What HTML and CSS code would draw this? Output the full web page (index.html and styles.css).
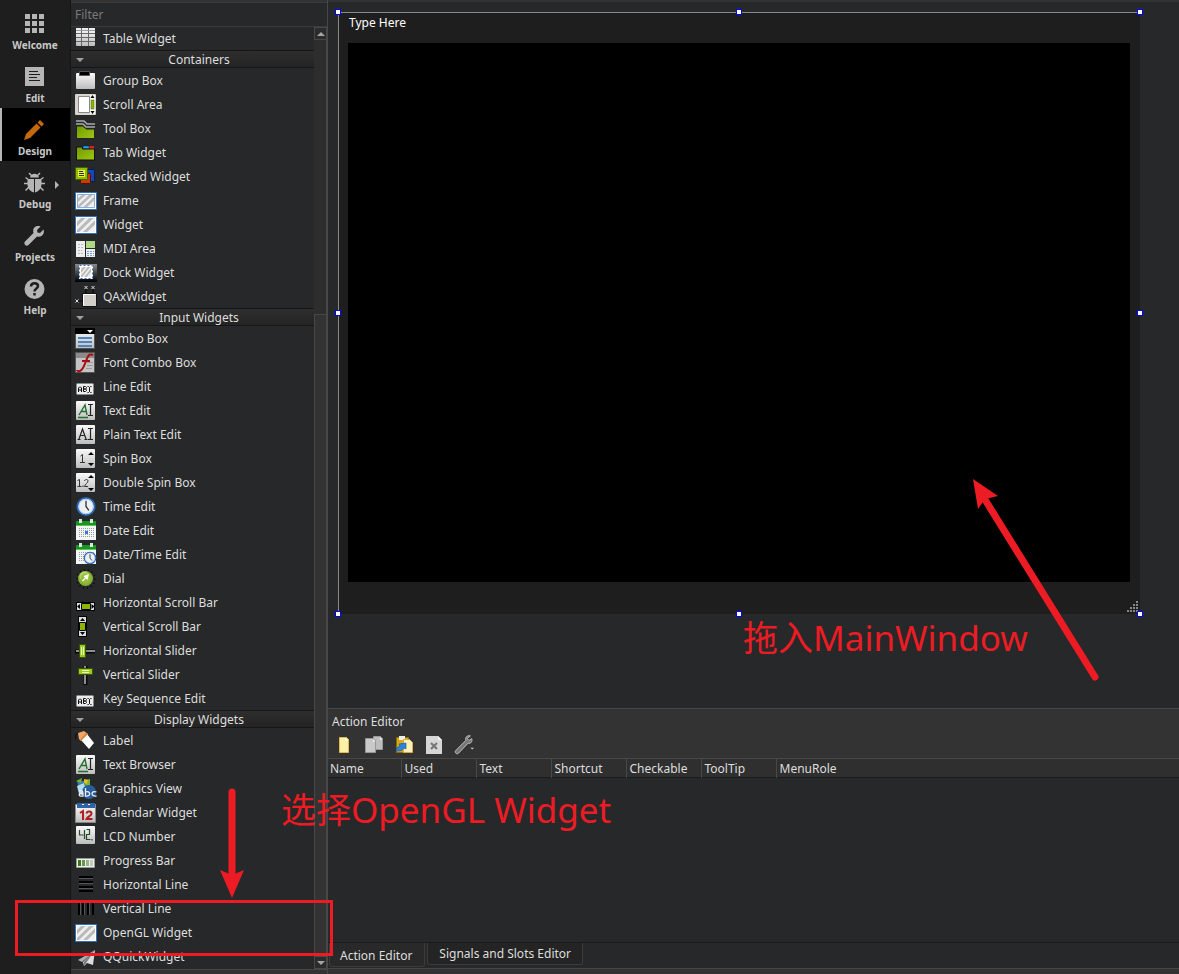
FILE: index.html
```html
<!DOCTYPE html>
<html lang="en">
<head>
<meta charset="utf-8">
<title>Form Designer</title>
<link rel="stylesheet" href="styles.css">
</head>
<body>
<svg class="defs" aria-hidden="true">
  <defs>
    <linearGradient id="silver" x1="0" y1="0" x2="0" y2="1"><stop offset="0" stop-color="#fafafa"/><stop offset="1" stop-color="#bdbdbd"/></linearGradient>
    <linearGradient id="green" x1="0" y1="0" x2="1" y2="1"><stop offset="0" stop-color="#6f9a00"/><stop offset="1" stop-color="#a0c814"/></linearGradient>
    <linearGradient id="darkbar" x1="0" y1="0" x2="0" y2="1"><stop offset="0" stop-color="#8a8a8a"/><stop offset="1" stop-color="#000"/></linearGradient>
    <symbol id="hatch" viewBox="0 0 20 16" preserveAspectRatio="none"><path fill="#f0f0f0" d="M0 0h20v16H0z"/><path stroke="#bababa" stroke-width="3.400" d="M-2 9 9-2M-2 18 18-2M7 18 22 3"/></symbol>
    <symbol id="clock" viewBox="0 0 22 22"><circle cx="11" cy="11" r="9" fill="#eef1f4" stroke="#2a66b4" stroke-width="2"/><circle cx="11" cy="11" r="7.600" fill="none" stroke="#a9c9ec"/><path fill="none" stroke="#333" stroke-width="1.400" d="M11 5v6l3 4"/></symbol>
    <symbol id="calendar" viewBox="0 0 22 22"><path fill="#f4f4f4" d="M1 5h20v16H1z"/><path fill="#1a9422" d="M1 2h20v5H1z"/><path fill="#55c452" d="M1 6h20v1H1z"/><path fill="#d8e8d8" d="M4 0h3v4H4zM15 0h3v4h-3z"/><path stroke="#9a9da3" stroke-width="1" stroke-dasharray="1 1" d="M4 9.500h15M4 11.500h15M4 13.500h15M4 15.500h15M4 17.500h15"/></symbol>

    <symbol id="i-table" viewBox="0 0 22 22"><rect x="1" y="1" width="19" height="18" rx="1" fill="url(#silver)"/><path fill="#eee" d="M1 1h19v5H1z"/><path stroke="#666" d="M1 6.500h19M1 10.500h19M1 14.500h19M6.500 1v18M13.500 1v18"/><path stroke="#999" d="M1 3.500h19"/></symbol>
    <symbol id="i-group" viewBox="0 0 22 22"><rect x="1" y="4" width="19" height="16" rx="1" fill="url(#silver)"/><path stroke="#555" d="M4.500 2.500h10v4h-10z"/></symbol>
    <symbol id="i-scroll" viewBox="0 0 22 22"><rect width="21" height="21" y="1" rx="1" fill="#d8d4cc"/><path fill="#fff" stroke="#888" d="M3.500 3.500h11v16h-11z"/><path fill="#f6f6f6" d="M15 2h5v19h-5z"/><path fill="#8cb400" stroke="#4c6400" stroke-width=".5" d="M16 7h3v9h-3z"/><path d="m15.500 5 2-3 2 3zM15.500 18l2 3 2-3z"/></symbol>
    <symbol id="i-toolbox" viewBox="0 0 22 22"><path fill="url(#green)" stroke="#222" d="M1.500 9h6l4 3h8v9.500h-18z"/><path fill="none" stroke="#aaa" stroke-width="1.500" d="M1 4h8l3 3h8M1 7h7l3 3h9"/></symbol>
    <symbol id="i-tab" viewBox="0 0 22 22"><path fill="url(#green)" stroke="#111" d="M1.500 6h6v2h12v11h-18z"/><path fill="#27a1ef" stroke="#024" stroke-width=".5" d="M8 5h6v2.500H8z"/><path fill="#e02020" d="M14.500 5H19v2.500h-4.500z"/></symbol>
    <symbol id="i-stack" viewBox="0 0 22 22"><rect x="9.500" y="4.500" width="10" height="12" rx="1" fill="#1746b8" stroke="#001a60"/><rect x="5.500" y="8.500" width="10" height="10" rx="1" fill="#c43c08" stroke="#4c1200"/><rect x=".5" y="2.500" width="12" height="12" rx="1" fill="#91bd00" stroke="#436000"/><path fill="#e6f52c" d="M3 5h7v7H3z"/><path stroke="#333" d="M4 6.500h4M4 8.500h5M4 10.500h5"/></symbol>
    <symbol id="i-frame" viewBox="0 0 22 22"><path fill="#fff" stroke="#2d6fc0" d="M.5 3.500h21v17H.5z"/><use href="#hatch" x="3" y="6" width="16" height="12"/><path fill="none" stroke="#8faed0" d="M2.500 5.500h17v13h-17z"/></symbol>
    <symbol id="i-widget" viewBox="0 0 22 22"><path fill="#fff" stroke="#2d6fc0" d="M.5 3.500h21v17H.5z"/><use href="#hatch" x="2" y="5" width="18" height="14"/></symbol>
    <symbol id="i-mdi" viewBox="0 0 22 22"><path fill="#eee" d="M1 4h9v16H1zM11 12h9v8h-9z"/><path fill="#add783" d="M11 4h9v7h-9z"/><path stroke="#bbb" stroke-dasharray="2 1" d="M3 7.500h5M3 10.500h5M3 13.500h4M3 16.500h5"/><path stroke="#7aa2d2" stroke-dasharray="2 1" d="M12 14.500h7M12 16.500h7M12 18.500h7"/></symbol>
    <symbol id="i-dock" viewBox="0 0 22 22"><path fill="url(#darkbar)" d="M0 3h22v18H0z"/><path fill="#fff" d="M4 4h14v14H4z"/><path fill="none" stroke="#2d6fc0" stroke-dasharray="2 2" d="M4.500 4.500h13v13h-13z"/><use href="#hatch" x="6" y="6" width="10" height="10"/></symbol>
    <symbol id="i-qax" viewBox="0 0 22 22"><path fill="#d2cec8" stroke="#111" d="M7.500 8.500h14v13h-14z"/><path fill="none" stroke="#fff" d="M8.500 20.500v-11h12"/><path stroke="#000" d="M11 4v4M18 4v4M3 16h4"/><path fill="none" stroke="#ddd" d="m9.500 1 3 3m0-3-3 3m7-3 3 3m0-3-3 3m-16 10.500 3 3m0-3-3 3"/></symbol>
    <symbol id="i-combo" viewBox="0 0 22 22"><path fill="url(#silver)" stroke="#555" d="M.5 1.500h19v20H.5z"/><path d="M0 1h20v6H0z"/><path fill="#fff" d="M12 3h6l-3 3z"/><path stroke="#4d83bf" stroke-width="2" d="M3 11h14M3 15h14M3 19h14"/></symbol>
    <symbol id="i-font" viewBox="0 0 22 22"><path fill="#c4c4c4" stroke="#555" d="M.5 1.500h19v20H.5z"/><path fill="#8b8b8b" d="M1 2h18v5H1z"/><path stroke="#999" d="M12 11.500h6M12 14.500h6M11 17.500h6"/><path fill="none" stroke="#a80d13" stroke-width="2" d="M18 4c-4-2-5 1-7 6s-3 9-6 10c-1 .5-3 0-3-1M7 10h8"/></symbol>
    <symbol id="i-abi" viewBox="0 0 22 22"><rect x="1.500" y="8.500" width="17" height="11" rx="1" fill="#ececec" stroke="#888"/><path fill="none" stroke="#111" d="M3.500 17v-4l1-1h1l1 1v4m-3-2h3M8.500 11.500v5h2l1-1v-.5l-1-1h-2 2l1-1v-.5l-1-1zM12.500 11.500h1l1 1 1-1h1m-2 1v4m-2 1h1l1-1 1 1h1"/></symbol>
    <symbol id="sheet" viewBox="0 0 22 22"><rect x="1" y="2" width="19" height="19" rx="1" fill="url(#silver)"/></symbol>
    <symbol id="i-text" viewBox="0 0 22 22"><use href="#sheet"/><path fill="none" stroke="#22712e" stroke-width="1.400" d="m4 16 6-10 2 10M6 12.500h5M3 18.500h10"/><path fill="none" stroke="#222" stroke-width="1.200" d="M13 5.500h5M15.500 5.500v11M13 16.500h5"/></symbol>
    <symbol id="i-plain" viewBox="0 0 22 22"><use href="#sheet"/><path fill="none" stroke="#222" stroke-width="1.200" d="M4 16 7.500 6 11 16M5.500 12.500h4M2.500 16.500h3M9.500 16.500h3M13 5.500h5M15.500 5.500v11M13 16.500h5"/></symbol>
    <symbol id="i-spin" viewBox="0 0 22 22"><use href="#sheet"/><path fill="none" stroke="#333" d="m5.500 9 2-1.500V15M5 15.500h5"/><path d="m13 8 3-3 3 3zM13 16l3 3 3-3z"/></symbol>
    <symbol id="i-dspin" viewBox="0 0 22 22"><use href="#sheet"/><path fill="none" stroke="#333" d="m2.500 9.500 2-1V15M2.500 15.500h4M8 14.500v1.500M9.500 10c.5-2 3.500-2 3.500 0s-3 3-3.500 5.500H13"/><path d="m13 7 3-3 3 3zM13 17l3 3 3-3z"/></symbol>
    <symbol id="i-time" viewBox="0 0 22 22"><use href="#clock" x="0" y="1" width="22" height="21"/></symbol>
    <symbol id="i-date" viewBox="0 0 22 22"><use href="#calendar" x="0" y="0" width="22" height="22"/><path fill="#2f7be0" d="M10 12h3v3h-3z"/></symbol>
    <symbol id="i-datetime" viewBox="0 0 22 22"><use href="#calendar" x="0" y="0" width="22" height="22"/><use href="#clock" x="8" y="8" width="14" height="14"/></symbol>
    <symbol id="i-dial" viewBox="0 0 22 22"><circle cx="11" cy="12" r="9" fill="none" stroke="#0d0d0d" stroke-width="2" stroke-dasharray="1 3"/><circle cx="10.500" cy="11.500" r="7.500" fill="#86ae30"/><circle cx="9.500" cy="9.500" r="5" fill="#b5d468"/><circle cx="10.500" cy="11.500" r="5" fill="#93bf3f"/><path fill="#fff" d="m14 7-1.500 6-1.800-1.500L8 14.500l-1-1 3-2.700L8.500 9z"/></symbol>
    <symbol id="i-hscroll" viewBox="0 0 22 22"><rect x="1.500" y="11.500" width="18" height="8" fill="#ddd" stroke="#000"/><path fill="#8cb400" stroke="#000" d="M6.500 12.500h9v6h-9z"/><path d="m5 13-3 2.500L5 18zM16.500 13l3 2.500-3 2.500z"/></symbol>
    <symbol id="i-vscroll" viewBox="0 0 22 22"><rect x="3.500" y="1.500" width="8" height="20" fill="#ddd" stroke="#000"/><path fill="#8cb400" stroke="#000" d="M4.500 7.500h6v8h-6z"/><path d="m5 6 2.500-3L10 6zM5 17l2.500 3 2.500-3z"/></symbol>
    <symbol id="i-hslider" viewBox="0 0 22 22"><path stroke="#080808" stroke-width="4" d="M0 12.500h20"/><path stroke="#bbb" stroke-width="1.500" d="M1 12h19"/><path fill="#9ccc1b" stroke="#38520a" d="M4.500 5.500h6v13h-6z"/><path stroke="#e8ffc0" d="M6.500 8v8M8.500 8v8"/></symbol>
    <symbol id="i-vslider" viewBox="0 0 22 22"><path stroke="#080808" stroke-width="4" d="M10.500 3v19"/><path stroke="#bbb" stroke-width="1.500" d="M10 3v18"/><path fill="#9ccc1b" stroke="#38520a" d="M3.500 5.500h14v6h-14z"/><path stroke="#e8ffc0" d="M7 7.500h7M7 9.500h7"/></symbol>
    <symbol id="i-label" viewBox="0 0 22 22"><path fill="none" stroke="#111" stroke-width="1.300" d="M5 5C1 3 0 7 1 10"/><path fill="#f0a768" d="m3 4 6-2 4 3-7 7-2-2z"/><path fill="#fff" d="m12 5 7 9-5 6-8-9z"/><path fill="#d6863e" d="m11 4 2 1-7 7-1-1z"/></symbol>
    <symbol id="i-graphics" viewBox="0 0 22 22"><path fill="#3d79ad" d="M2 4h7l2 7 8 1 1 6-6 4-9-5z"/><path fill="#b3dcee" d="m2 9 7-3 3 13-8-2z"/><path fill="#71b42f" d="m1 4 6-3-1 5zM9 3l6-1v7l-4 2z"/><path fill="#e9bc22" d="m9 2 4 1-1 4-3-1z"/><circle cx="14" cy="15" r="7" fill="#285e9f"/><path fill="none" stroke="#eee" stroke-width="1.300" d="M4 14c4-1 4 0 4 5-5 1-5-3 0-3M10.500 11v8c6 1 5-6 0-4M21.500 15c-6-2-6 5 0 4"/></symbol>
    <symbol id="i-cal" viewBox="0 0 22 22"><path fill="url(#silver)" stroke="#888" d="M.5 3.500h20v18H.5z"/><path fill="#2e62a9" d="M2 2h18v5H2z"/><path fill="#fff" d="M7 3h2v1H7zM13 3h2v1h-2z"/><path fill="none" stroke="#b11e22" stroke-width="2" d="m5 12 3-2v9M11.500 12.500c.5-3 5-2.500 5 0s-4 3-5 5.500h6"/></symbol>
    <symbol id="i-lcd" viewBox="0 0 22 22"><rect x="1" y="1" width="19" height="18" rx="1" fill="url(#silver)"/><path fill="none" stroke="#244b2b" stroke-width="1.200" d="M4.500 5v5h4M9.500 5v9M11.500 4.500h3v5h-3v5h4M17 14v1.500"/></symbol>
    <symbol id="i-progress" viewBox="0 0 22 22"><path fill="#eee" stroke="#999" d="M1.500 9.500h18v9h-18z"/><path fill="#3d7a10" d="M3 11h3v6H3z"/><path fill="#6c9450" d="M7 11h3v6H7z"/><path fill="#9bb389" d="M11 11h3v6h-3z"/><path fill="#c0cdb6" d="M15 11h3v6h-3z"/></symbol>
    <symbol id="i-hline" viewBox="0 0 22 22"><path stroke="#000" stroke-width="2" d="M4 4h14M4 9h14M4 14h14M4 18h14"/><path stroke="#555" d="M4 5.500h14M4 10.500h14M4 15.500h14"/></symbol>
    <symbol id="i-vline" viewBox="0 0 22 22"><path stroke="#000" stroke-width="2" d="M4 3v15M8 3v15M13 3v15M18 3v15"/><path stroke="#555" d="M9.500 3v15M14.500 3v15M5.500 3v15"/></symbol>
    <symbol id="i-quick" viewBox="0 0 22 22"><path fill="#b0b0b0" d="M20 5 3 15l4 2z"/><path fill="#ddd" d="M20 5 8 17l1 4 3-3 6 2z"/><path fill="#777" d="M20 5 9 17v4l2-3z"/></symbol>
  </defs>
</svg>

<div class="app">
  <nav class="rail" aria-label="Modes">
    <button class="mode"><svg viewBox="0 0 22 22"><path fill="#b5b5b5" d="M2 1h5v5H2zM9 1h5v5H9zM16 1h5v5h-5zM2 8h5v5H2zM9 8h5v5H9zM16 8h5v5h-5zM2 15h5v5H2zM9 15h5v5H9zM16 15h5v5h-5z"/></svg><span>Welcome</span></button>
    <button class="mode"><svg viewBox="0 0 22 22"><path fill="#b5b5b5" d="M2 1h19v19H2z"/><path stroke="#1e1e1e" d="M6 5.500h9M6 8.500h11M6 11.500h8M6 14.500h11"/></svg><span>Edit</span></button>
    <button class="mode active"><svg viewBox="0 0 22 22"><path fill="#c56a08" d="m1 21 2-6L13.500 4.500l4 4L7 19zM14.500 3.500 17 1l4 4-2.500 2.500z"/></svg><span>Design</span></button>
    <button class="mode"><svg viewBox="0 0 22 22"><path fill="none" stroke="#b5b5b5" stroke-width="1.500" d="m6 1 3 3m8-3-3 3M2.500 5.500 6 8M1 11.500h5M2.500 18.500 6 15M20.500 5.500 17 8m5 3.500h-5m3.500 7L17 15"/><path fill="#b5b5b5" d="M7 5.500c1-5 8-5 9 0zM4.800 7H11v13.500C5 19 3.500 13 4.800 7zM12 7h6.200c1.300 6-.2 12-6.200 13.500z"/></svg><i class="more"></i><span>Debug</span></button>
    <button class="mode"><svg viewBox="0 0 22 22"><path fill="#b5b5b5" d="M20.500 4.500 17 8l-2.500-.5L14 5l3.500-3.500C13 0 9 3 10.500 8L2 16.500c-2 2 1 6 3.500 3.500L14 11.500c5 1.500 8-3 6.500-7z"/></svg><span>Projects</span></button>
    <button class="mode"><svg viewBox="0 0 22 22"><circle cx="11.500" cy="11" r="10" fill="#b5b5b5"/><path fill="none" stroke="#1e1e1e" stroke-width="2.500" d="M8 8.500c0-4.500 7-4 7-.5 0 2.500-3.500 2.500-3.500 5.500M11.500 15v2.500"/></svg><span>Help</span></button>
  </nav>

  <aside class="sidebar">
    <input class="filter" type="text" placeholder="Filter" aria-label="Filter">
    <div class="box">
      <div class="list">
        <ul>
          <li><svg><use href="#i-table"/></svg>Table Widget</li>
        </ul>
        <button class="group">Containers</button>
        <ul>
          <li><svg><use href="#i-group"/></svg>Group Box</li>
          <li><svg><use href="#i-scroll"/></svg>Scroll Area</li>
          <li><svg><use href="#i-toolbox"/></svg>Tool Box</li>
          <li><svg><use href="#i-tab"/></svg>Tab Widget</li>
          <li><svg><use href="#i-stack"/></svg>Stacked Widget</li>
          <li><svg><use href="#i-frame"/></svg>Frame</li>
          <li><svg><use href="#i-widget"/></svg>Widget</li>
          <li><svg><use href="#i-mdi"/></svg>MDI Area</li>
          <li><svg><use href="#i-dock"/></svg>Dock Widget</li>
          <li><svg><use href="#i-qax"/></svg>QAxWidget</li>
        </ul>
        <button class="group">Input Widgets</button>
        <ul>
          <li><svg><use href="#i-combo"/></svg>Combo Box</li>
          <li><svg><use href="#i-font"/></svg>Font Combo Box</li>
          <li><svg><use href="#i-abi"/></svg>Line Edit</li>
          <li><svg><use href="#i-text"/></svg>Text Edit</li>
          <li><svg><use href="#i-plain"/></svg>Plain Text Edit</li>
          <li><svg><use href="#i-spin"/></svg>Spin Box</li>
          <li><svg><use href="#i-dspin"/></svg>Double Spin Box</li>
          <li><svg><use href="#i-time"/></svg>Time Edit</li>
          <li><svg><use href="#i-date"/></svg>Date Edit</li>
          <li><svg><use href="#i-datetime"/></svg>Date/Time Edit</li>
          <li><svg><use href="#i-dial"/></svg>Dial</li>
          <li><svg><use href="#i-hscroll"/></svg>Horizontal Scroll Bar</li>
          <li><svg><use href="#i-vscroll"/></svg>Vertical Scroll Bar</li>
          <li><svg><use href="#i-hslider"/></svg>Horizontal Slider</li>
          <li><svg><use href="#i-vslider"/></svg>Vertical Slider</li>
          <li><svg><use href="#i-abi"/></svg>Key Sequence Edit</li>
        </ul>
        <button class="group">Display Widgets</button>
        <ul>
          <li><svg><use href="#i-label"/></svg>Label</li>
          <li><svg><use href="#i-text"/></svg>Text Browser</li>
          <li><svg><use href="#i-graphics"/></svg>Graphics View</li>
          <li><svg><use href="#i-cal"/></svg>Calendar Widget</li>
          <li><svg><use href="#i-lcd"/></svg>LCD Number</li>
          <li><svg><use href="#i-progress"/></svg>Progress Bar</li>
          <li><svg><use href="#i-hline"/></svg>Horizontal Line</li>
          <li><svg><use href="#i-vline"/></svg>Vertical Line</li>
          <li><svg><use href="#i-widget"/></svg>OpenGL Widget</li>
          <li><svg><use href="#i-quick"/></svg>QQuickWidget</li>
        </ul>
      </div>
      <div class="scrollbar">
        <button class="step up" aria-label="Scroll up"></button>
        <div class="track"></div>
        <div class="thumb"></div>
        <button class="step down" aria-label="Scroll down"></button>
      </div>
    </div>
  </aside>

  <main class="main">
    <section class="canvas">
      <div class="form">
        <div class="menubar">Type Here</div>
        <div class="central"></div>
        <div class="statusbar"><svg viewBox="0 0 12 12"><path fill="#858585" d="M9 0h2v2H9zM6 3h2v2H6zM9 3h2v2H9zM3 6h2v2H3zM6 6h2v2H6zM9 6h2v2H9zM0 9h2v2H0zM3 9h2v2H3zM6 9h2v2H6zM9 9h2v2H9z"/></svg></div>
        <i class="handle t l"></i><i class="handle t c"></i><i class="handle t r"></i>
        <i class="handle m l"></i><i class="handle m r"></i>
        <i class="handle b l"></i><i class="handle b c"></i><i class="handle b r"></i>
      </div>
    </section>
    <section class="dock">
      <header class="dock-head">
        <h2>Action Editor</h2>
        <div class="tools">
          <button aria-label="New"><svg viewBox="0 0 20 20"><path fill="#fff0a8" stroke="#e0bd52" d="M5.500 2.500h7l2 2v13h-9z"/><path fill="#fff" d="M11 3v3h3z"/></svg></button>
          <button aria-label="Copy"><svg viewBox="0 0 20 20"><path fill="#bdbdbd" stroke="#999" d="M9.500 1.500h7l2 2v11h-9z"/><path fill="#c9c9c9" stroke="#999" d="M1.500 3.500h8l2 2v12h-10z"/><path fill="#eee" d="M9 4v3h2zM16 2v3h2z"/></svg></button>
          <button aria-label="Paste"><svg viewBox="0 0 20 20"><path fill="#d9a912" stroke="#8f6b00" d="M2.500 2.500h12v15h-12z"/><path fill="#eee" d="M5 1h6v4H5z"/><path fill="#fff0b8" stroke="#d3ad47" d="M9.500 4.500h6l3 3v10h-9z"/><path fill="#2d83dc" stroke="#155298" stroke-width=".6" d="M2 16c0-3 1-4 4-4.500L5 9l7-1v6l-2-1c-2 3-4 3-8 3z"/></svg></button>
          <button aria-label="Delete"><svg viewBox="0 0 20 20"><path fill="#d6d6d6" d="M2 1h12l4 4v14H2z"/><path fill="#f4f4f4" d="M14 1v4h4z"/><path stroke="#777" stroke-width="2.200" d="m7 8 6 6m0-6-6 6"/></svg></button>
          <button aria-label="Configure"><svg viewBox="0 0 22 22"><path fill="#777" stroke="#c8c8c8" d="M18 1c-4-1-6 2-5 5L2 17c-2 2 1 5 3 3L15.500 9c3 1 5-2 4-5l-3 2-2-2z"/><path fill="#ccc" d="M18 14h4l-2 2z"/></svg></button>
        </div>
      </header>
      <table class="actions">
        <thead><tr><th>Name</th><th>Used</th><th>Text</th><th>Shortcut</th><th>Checkable</th><th>ToolTip</th><th>MenuRole</th></tr></thead>
      </table>
      <div class="empty"></div>
      <div class="tabs" role="tablist">
        <button class="tab selected" role="tab" aria-selected="true">Action Editor</button>
        <button class="tab" role="tab" aria-selected="false">Signals and Slots Editor</button>
      </div>
    </section>
  </main>
</div>

<div class="notes">
  <svg class="arrows" width="1179" height="974" viewBox="0 0 1179 974" aria-hidden="true">
    <path d="M232 792v82M1095 677 984 498"/>
    <path class="head" d="m232 898-12-28 12 5 12-5zM973 479l25 17-13 3-7 10z"/>
  </svg>
  <div class="frame-mark"></div>
  <p class="note select-note">选择OpenGL Widget</p>
  <p class="note drag-note">拖入MainWindow</p>
</div>
</body>
</html>
```
FILE: styles.css
```css
* { box-sizing: border-box; }
body {
  margin: 0;
  background: #333;
  color: #dedede;
  font: 12px/20px "Noto Sans", "Noto Sans CJK SC", sans-serif;
}
button { margin: 0; padding: 0; border: 0; background: none; color: inherit; font: inherit; }
ul { margin: 0; padding: 0; list-style: none; }
.defs { position: absolute; width: 0; height: 0; }

.app { display: flex; min-height: 100vh; }

.rail { flex: none; width: 70px; padding-top: 2px; background: #1e1e1e; }
.mode {
  position: relative;
  display: flex;
  flex-direction: column;
  align-items: center;
  gap: 2px;
  width: 100%;
  height: 53px;
  padding-top: 11px;
  color: #c8c8c8;
  font-size: 10px;
  font-weight: 700;
  line-height: 16px;
}
.mode svg { width: 22px; height: 22px; margin-right: 2px; }
.mode.active { background: #000; border-left: 2px solid #b5b5b5; padding-right: 2px; }
.more {
  position: absolute;
  top: 20px;
  right: 11px;
  border: solid transparent;
  border-width: 4px 0 4px 4px;
  border-left-color: #b5b5b5;
}

.sidebar {
  flex: none;
  display: flex;
  flex-direction: column;
  width: 257px;
  padding-top: 2px;
  padding-bottom: 4px;
  border-left: 1px solid #151515;
}
.filter {
  width: 100%;
  height: 25px;
  padding: 0 4px;
  border: 1px solid #3a3a3a;
  border-width: 1px 0;
  background: #262829;
  color: #d8d8d8;
  font: inherit;
}
.filter::placeholder { color: #7b7b7b; opacity: 1; }
.box { flex: 1; display: flex; background: #262829; border-bottom: 1px solid #464646; }
.list { flex: 1; margin-top: -1px; }
.list li { display: flex; align-items: flex-start; gap: 6px; height: 24px; padding-left: 4px; line-height: 26px; }
.list svg { flex: none; width: 22px; height: 22px; margin-top: 1px; }
.group {
  position: relative;
  display: block;
  width: 100%;
  height: 18px;
  padding: 1px 0 0 13px;
  border: solid #161616;
  border-width: 1px 0;
  background: linear-gradient(#2e2e2e, #242424);
  line-height: 16px;
}
.group::before {
  content: "";
  position: absolute;
  top: 7px;
  left: 5px;
  border: solid transparent;
  border-width: 4px 4px 0;
  border-top-color: #a0a0a0;
}
.scrollbar { display: flex; flex-direction: column; width: 13px; background: #333; }
.step { display: grid; place-items: center; height: 13px; background: #2b2b2b; border: 1px solid #484848; }
.step::before { content: ""; border: solid transparent; border-width: 0 4px 4px; border-bottom-color: #a5a5a5; }
.step.down::before { border-width: 4px 4px 0; border-top-color: #a5a5a5; }
.track { flex: 275; background: #2d2d2d; border-right: 1px solid #484848; }
.thumb { flex: 641; background: #333; border: 1px solid #484848; }

.main { flex: 1; display: flex; flex-direction: column; min-width: 0; padding: 2px 0 5px; border-left: 1px solid #484848; }
.canvas { flex: 1; display: flex; padding: 10px 39px 94px 10px; background: #262829; }
.form {
  position: relative;
  flex: 1;
  display: flex;
  flex-direction: column;
  padding: 0 10px 0 9px;
  border: solid #8a8a8a;
  border-width: 1px 0 0 1px;
  background: #1e1e1e;
}
.menubar { height: 30px; padding: 0 1px; color: #fff; }
.central { flex: 1; background: #000; }
.statusbar { display: flex; justify-content: flex-end; align-items: flex-end; height: 32px; margin-right: -9px; padding-bottom: 1px; }
.statusbar svg { width: 12px; height: 12px; }
.handle { position: absolute; width: 6px; height: 6px; border: 1px solid #00f; background: #fff; }
.t { top: -4px; }
.m { top: calc(50% - 4px); }
.b { bottom: -3px; }
.l { left: -4px; }
.c { left: calc(50% - 4px); }
.r { right: -3px; }

.dock { display: flex; flex-direction: column; height: 261px; border-top: 1px solid #484848; }
.dock-head { height: 49px; padding: 3px 4px 0; }
.dock-head h2 { margin: 0; font-size: 12px; font-weight: 400; line-height: 20px; }
.tools { display: flex; gap: 10px; margin-top: 3px; padding-left: 2px; }
.tools button, .tools svg { display: block; width: 20px; height: 20px; }
.actions { width: 100%; table-layout: fixed; border-collapse: collapse; border-top: 1px solid #484848; border-bottom: 1px solid #1b1b1b; }
.actions th { width: 75px; height: 18px; padding: 2px 3px 0; border-right: 1px solid #484848; background: #2f2f2f; font-weight: 400; line-height: 16px; text-align: left; }
.actions th:first-child { width: 73px; padding-left: 2px; }
.actions th:last-child { width: auto; border-right: 0; }
.empty { flex: 1; background: #262829; border-bottom: 1px solid #1b1b1b; }
.tabs { display: flex; align-items: flex-start; gap: 2px; height: 26px; background: #262829; border-bottom: 1px solid #464646; }
.tab { height: 22px; padding: 1px 11px 0; border: 1px solid #3c3c3c; border-top: 0; border-radius: 0 0 3px 3px; background: #242424; }
.tab.selected { height: 24px; padding: 2px 12px 0 10px; margin-left: 1px; background: #292929; }

/* Red mark-up drawn over the editor */
.notes { position: absolute; top: 0; left: 0; color: #ed1c24; pointer-events: none; }
.arrows { display: block; fill: none; stroke: #ed1c24; stroke-width: 7px; stroke-linecap: round; }
.arrows .head { fill: #ed1c24; stroke: none; }
.frame-mark { position: absolute; top: 900px; left: 15px; width: 318px; height: 56px; border: 3px solid #ed1c24; }
.note { position: absolute; margin: 0; font-size: 35px; line-height: 48px; white-space: nowrap; }
.select-note { top: 786px; left: 281px; }
.drag-note { top: 614px; left: 743px; }
```
